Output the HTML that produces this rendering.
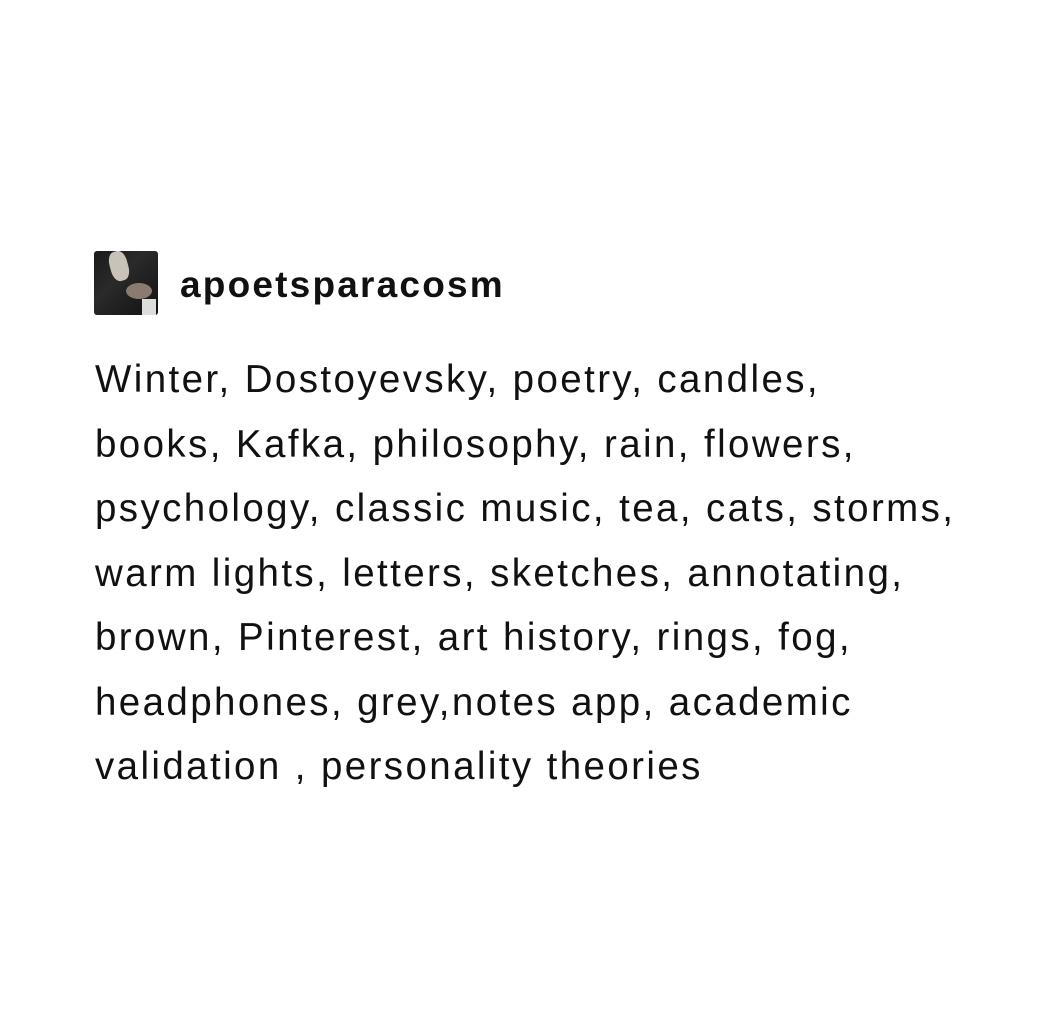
<!DOCTYPE html>
<html><head><meta charset="utf-8"><style>
html,body{margin:0;padding:0;background:#fff;width:1064px;height:1028px;overflow:hidden}
body{position:relative;font-family:"Liberation Sans",sans-serif;color:#111}
.av{position:absolute;left:94px;top:251px;width:64px;height:64px;border-radius:3px;background:linear-gradient(135deg,#1a1a1a 0%,#2a2a2a 40%,#111 100%);overflow:hidden}
.av i{position:absolute;display:block}
.name{position:absolute;left:180px;top:262px;font-size:37px;font-weight:bold;line-height:46px;letter-spacing:2.2px}
.body{position:absolute;left:95px;top:348px;font-size:38.5px;line-height:64.5px;white-space:nowrap;letter-spacing:2.4px}
</style></head><body>
<div class="av">
<i style="left:16px;top:0;width:18px;height:30px;background:#c9c2b8;border-radius:40%;transform:rotate(-15deg)"></i>
<i style="left:32px;top:32px;width:26px;height:16px;background:#8a7a70;border-radius:50%"></i>
<i style="left:48px;top:48px;width:14px;height:16px;background:#ddd"></i>
</div>
<div class="name">apoetsparacosm</div>
<div class="body">Winter, Dostoyevsky, poetry, candles,<br>books, Kafka, philosophy, rain, flowers,<br>psychology, classic music, tea, cats, storms,<br>warm lights, letters, sketches, annotating,<br>brown, Pinterest, art history, rings, fog,<br>headphones, grey,notes app, academic<br>validation , personality theories</div>
</body></html>
